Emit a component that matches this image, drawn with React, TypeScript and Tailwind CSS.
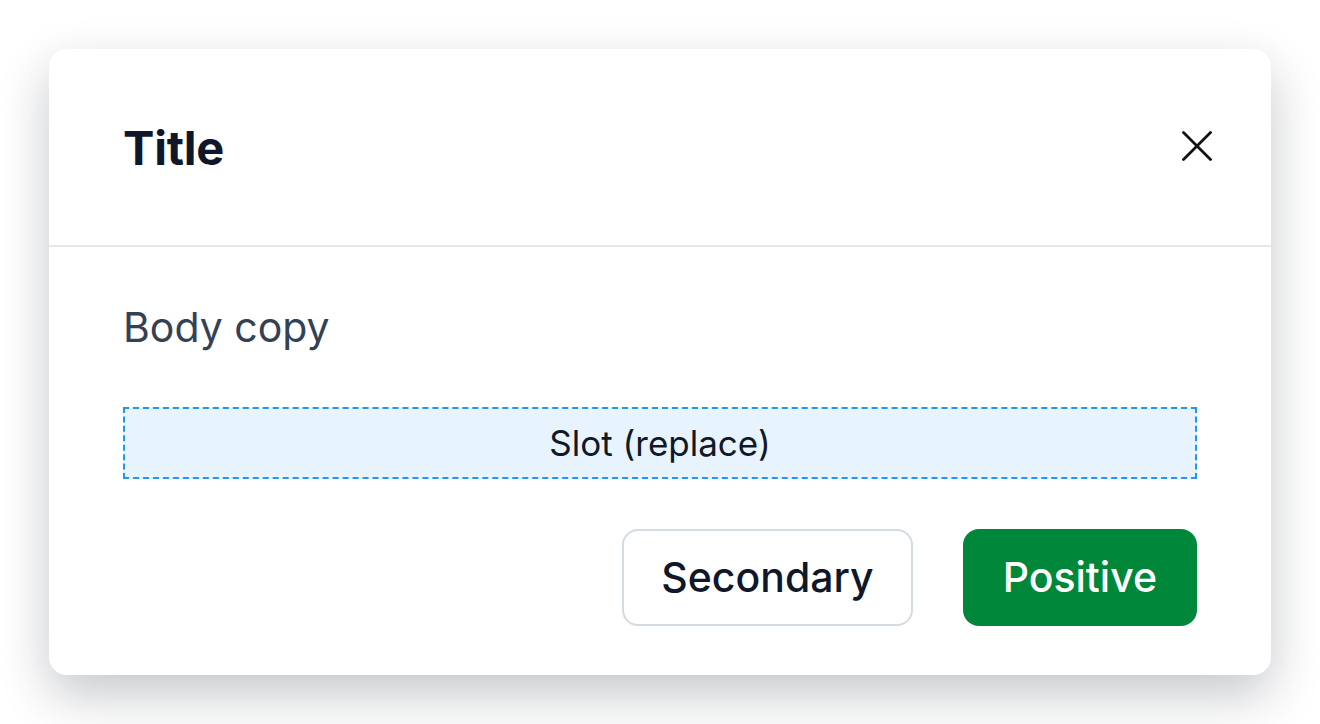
export default function App() {
  return (
    <div className="min-h-screen w-full bg-white pt-[49px] pl-[49px]" style={{ fontFamily: 'Inter, "Noto Sans", sans-serif' }}>
      {/* Dialog card */}
      <div className="w-[1222px] h-[626px] rounded-[18px] bg-white shadow-[0_20px_50px_rgba(15,23,42,0.24)] flex flex-col">
        {/* Header */}
        <div className="h-[198px] flex items-center justify-between pl-[74px] pr-[59px] border-b-2 border-[#e6e8eb]">
          <h1 className="text-[47px] font-bold text-[#0f172a] leading-none tracking-[-0.2px]">Title</h1>
          <button className="w-[30px] h-[30px] flex items-center justify-center text-[#111] -mt-[3px]">
            <svg width="30" height="30" viewBox="0 0 30 30" fill="none" stroke="currentColor" strokeWidth="2.8" strokeLinecap="round">
              <path d="M1.5 1.5L28.5 28.5M28.5 1.5L1.5 28.5" />
            </svg>
          </button>
        </div>

        {/* Body */}
        <div className="flex-1 flex flex-col px-[74px] pt-[56px]">
          <p className="h-[48px] flex items-center text-[41px] text-[#334155] leading-none">Body copy</p>

          <div className="mt-[56px] h-[72px] flex items-center justify-center bg-[#e8f4fd] border-2 border-dashed border-[#2196f3]">
            <span className="text-[35px] text-[#111827]">Slot (replace)</span>
          </div>

          {/* Actions */}
          <div className="mt-[50px] flex justify-end gap-[50px]">
            <button className="h-[97px] px-[37px] rounded-[16px] border-2 border-[#d3dbe3] bg-white text-[41px] font-medium text-[#0f172a]">
              Secondary
            </button>
            <button className="h-[97px] px-[40px] rounded-[16px] bg-[#00873a] text-[41px] font-medium text-white">
              Positive
            </button>
          </div>
        </div>
      </div>
    </div>
  );
}
